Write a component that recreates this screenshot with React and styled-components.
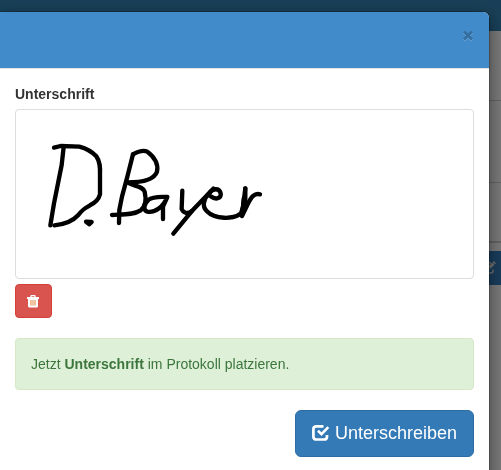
import { useState } from "react";
import styled, { createGlobalStyle } from "styled-components";

const GlobalStyle = createGlobalStyle`
    * {
        box-sizing: border-box;
    }

    body {
        margin: 0;
        overflow: hidden;
        background: white;
        color: #333;
        font-family: "Liberation Sans", Arial, sans-serif;
        font-size: 14px;
        line-height: 20px;
    }
`;

const Page = styled.div`
    min-height: 100vh;
    background: #f0f0f0;
`;

const Navbar = styled.div`
    height: 31px;
    background: #317fae;
`;

const PageRow = styled.div`
    height: ${(props) => props.$height}px;
    border-bottom: ${(props) => props.$line || 1}px solid #c4c4c4;
`;

const PageToolbar = styled.div`
    display: flex;
    justify-content: flex-end;
    padding-top: 8px;
    overflow: hidden;
`;

const PageButton = styled.button`
    display: flex;
    align-items: center;
    height: 34px;
    padding: 0 5px 0 12px;
    border: none;
    background: #337ab7;
    color: white;
`;

const Backdrop = styled.div`
    position: fixed;
    inset: 0;
    padding: 12px 12px 0 0;
    background: rgba(0, 0, 0, 0.5);
`;

const Dialog = styled.div`
    min-height: 100vh;
    background: white;
    border-top-right-radius: 6px;
    box-shadow: 0 5px 15px rgba(0, 0, 0, 0.5), 0 0 0 1px rgba(0, 0, 0, 0.2);
`;

const Header = styled.div`
    display: flex;
    justify-content: flex-end;
    align-items: flex-start;
    height: 57px;
    padding: 18px 15px;
    border-bottom: 1px solid #e5e5e5;
    border-top-right-radius: 6px;
    background: #428bca;
`;

const CloseButton = styled.button`
    padding: 0;
    border: none;
    background: transparent;
    color: black;
    opacity: 0.2;
    cursor: pointer;

    svg {
        display: block;
        filter: drop-shadow(0 1px 0 white);
    }
`;

const Body = styled.div`
    padding: 15px;
`;

const Label = styled.div`
    margin-bottom: 5px;
    font-weight: bold;
`;

const SignaturePad = styled.div`
    height: 170px;
    margin-bottom: 5px;
    border: 1px solid #ddd;
    border-radius: 4px;
    overflow: hidden;

    svg {
        display: block;
    }
`;

const Button = styled.button`
    display: inline-flex;
    align-items: center;
    justify-content: center;
    border: 1px solid;
    color: white;
    font-family: inherit;
    cursor: pointer;
`;

const DeleteButton = styled(Button)`
    width: 37px;
    height: 34px;
    border-color: #d43f3a;
    border-radius: 4px;
    background: #d9534f;
`;

const SubmitButton = styled(Button)`
    gap: 5px;
    padding: 10px 16px;
    border-color: #2e6da4;
    border-radius: 6px;
    background: #337ab7;
    font-size: 18px;
    line-height: 25px;
`;

const Alert = styled.div`
    margin: 20px 0;
    padding: 15px;
    border: 1px solid #d6e9c6;
    border-radius: 4px;
    background: #dff0d8;
    color: #3c763d;
`;

const Footer = styled.div`
    display: flex;
    justify-content: flex-end;
`;

const Signature = () => (
    <svg width="458" height="168" viewBox="0 0 458 168" role="img" aria-label="D. Bayer">
        <g
            transform="translate(24 25) scale(0.3333)"
            fill="none"
            stroke="black"
            strokeWidth="13"
            strokeLinecap="round"
            strokeLinejoin="round"
        >
            <path d="M71 36L65 90L59 120L42 205L31 271" />
            <path d="M42 38L62 33L118 35C140 41 155 49 169 64C180 80 181 95 180 120L180 178C176 194 165 204 150 211C130 222 125 226 115 240C95 262 65 269 43 271" />
            <path d="M138 260L155 261L148 268L140 262L152 264" />
            <path d="M279 58L262 125L246 185L238 225L237 264" />
            <path d="M279 58C295 49 310 44 322 50C345 66 356 90 351 110C343 132 312 142 262 142" />
            <path d="M262 142C278 154 308 152 314 170C320 195 315 215 302 226C280 240 250 238 216 240" />
            <path d="M382 186C360 185 335 186 325 195C312 206 308 226 322 230C345 235 370 215 382 186L369 215L369 252" />
            <path d="M427 167L425 222C431 236 444 237 456 228" />
            <path d="M520 161L455 229L400 296" />
            <path d="M512 184C530 197 544 188 542 175C538 158 518 160 508 174C490 192 486 215 500 228C525 254 580 254 603 235L616 195L616 160" />
            <path d="M616 160L606 243L622 210C634 185 644 173 660 178" />
            <path d="M613 190L609 230" strokeWidth="16" />
        </g>
    </svg>
);

const CloseIcon = () => (
    <svg width="12" height="12" viewBox="0 0 12 12" aria-hidden="true">
        <path d="M2 1.5L10 9.5M10 1.5L2 9.5" stroke="black" strokeWidth="2.8" />
    </svg>
);

const TrashIcon = () => (
    <svg width="13" height="13" viewBox="0 0 13 13" aria-hidden="true">
        <path d="M4 2V1.5Q4 .6 4.7 .6H7.3Q8 .6 8 1.5V2" fill="none" stroke="white" strokeWidth="1.4" />
        <path d="M0 2H12V4H0Z" fill="white" />
        <path d="M1 3.5H11V11.3Q11 12.4 10 12.4H2Q1 12.4 1 11.3Z" fill="white" />
        <path d="M3 5H9V10.5H3Z" fill="#f3bd92" />
        <path d="M5 5V10.5M7 5V10.5" stroke="#f0cfc4" strokeWidth=".7" />
    </svg>
);

const CheckIcon = () => (
    <svg width="18" height="18" viewBox="0 2 18 18" fill="none" stroke="white" aria-hidden="true">
        <path d="M11.5 3.3H4.5Q1.4 3.3 1.4 6V13.7Q1.4 16.5 4.5 16.5H12.2Q15 16.5 15 13.7V12" strokeWidth="2.7" />
        <path d="M6 7.8L9.5 11.2L16.3 4.2" strokeWidth="2.6" />
    </svg>
);

const EditIcon = () => (
    <svg width="13" height="14" viewBox="0 0 13 14" fill="none" stroke="#ddd" aria-hidden="true">
        <path d="M8 2H3Q1 2 1 4V10Q1 12 3 12H8Q10 12 10 10V8.5" strokeWidth="1.5" />
        <path d="M6.5 6.5L10.3 2.7" strokeWidth="3.2" />
        <path d="M10.2 .6L12.4 2.8" strokeWidth="1.6" />
        <path d="M4.5 6.5V8.5H6.5" strokeWidth="1.3" />
    </svg>
);

const App = () => {
    const [signed, setSigned] = useState(true);

    return (
        <>
            <GlobalStyle />
            <Page>
                <Navbar />
                <PageRow $height={70} />
                <PageRow $height={82} />
                <PageRow $height={60} $line={2} />
                <PageToolbar>
                    <PageButton aria-label="Bearbeiten">
                        <EditIcon />
                    </PageButton>
                </PageToolbar>
            </Page>
            <Backdrop>
                <Dialog role="dialog" aria-labelledby="signature-label">
                    <Header>
                        <CloseButton aria-label="Schließen">
                            <CloseIcon />
                        </CloseButton>
                    </Header>
                    <Body>
                        <Label id="signature-label">Unterschrift</Label>
                        <SignaturePad role="group" aria-labelledby="signature-label">
                            {signed && <Signature />}
                        </SignaturePad>
                        <DeleteButton aria-label="Löschen" onClick={() => setSigned(false)}>
                            <TrashIcon />
                        </DeleteButton>
                        <Alert>
                            Jetzt <strong>Unterschrift</strong> im Protokoll platzieren.
                        </Alert>
                        <Footer>
                            <SubmitButton>
                                <CheckIcon />
                                Unterschreiben
                            </SubmitButton>
                        </Footer>
                    </Body>
                </Dialog>
            </Backdrop>
        </>
    );
};

export default App;
